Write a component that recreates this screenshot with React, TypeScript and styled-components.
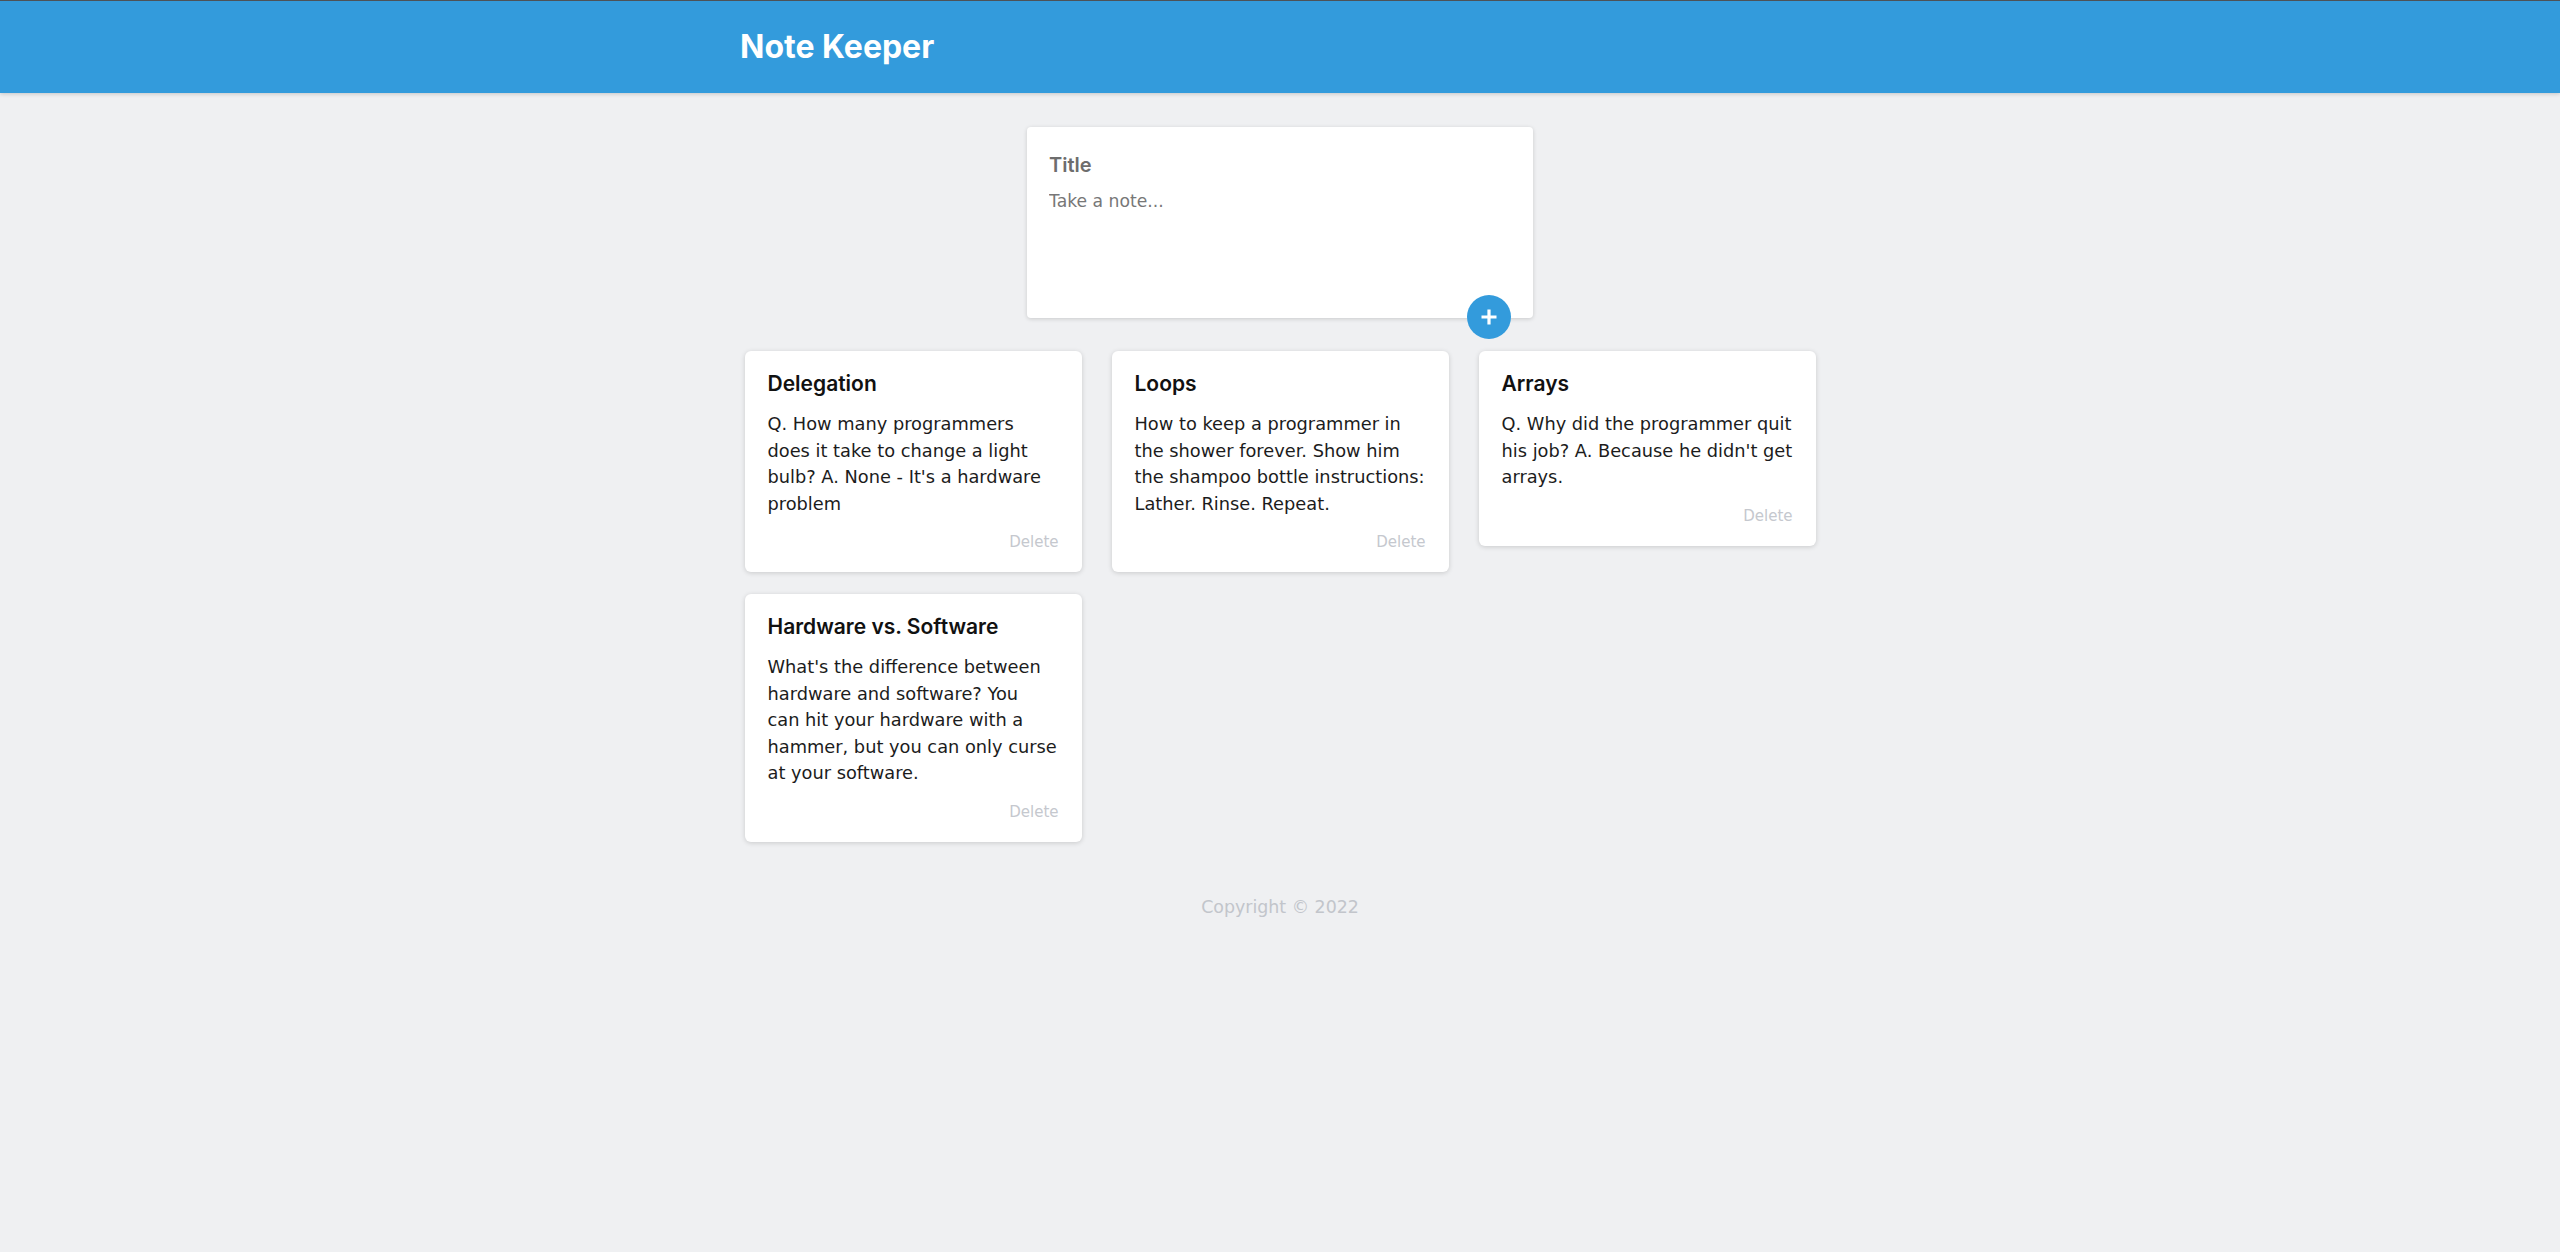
import React from "react";
import styled, { createGlobalStyle } from "styled-components";

const GlobalStyle = createGlobalStyle`
  html, body {
    margin: 0;
    padding: 0;
  }
  body {
    background: #eff0f2;
    font-family: "DejaVu Sans", "Noto Sans", sans-serif;
  }
  *, *::before, *::after {
    box-sizing: border-box;
  }
`;

const Page = styled.div`
  min-height: 100vh;
  display: flex;
  flex-direction: column;
`;

const Header = styled.header`
  height: 93px;
  border-top: 1px solid #4d5257;
  background: #339bdc;
  box-shadow: 0 1px 4px rgba(0, 0, 0, 0.18);
  display: flex;
  align-items: center;
`;

const HeaderInner = styled.div`
  width: 1080px;
  margin: 0 auto;
`;

const Brand = styled.h1`
  margin: 0;
  font-family: Inter, "Liberation Sans", sans-serif;
  font-weight: 700;
  font-size: 32px;
  line-height: 1;
  color: #ffffff;
`;

const Main = styled.main`
  padding-top: 34px;
  display: flex;
  flex-direction: column;
  align-items: center;
`;

const CreateForm = styled.form`
  position: relative;
  width: 506px;
  background: #ffffff;
  border-radius: 4px;
  box-shadow: 0 1px 4px rgba(0, 0, 0, 0.16);
  padding: 24px 22px 24px;
`;

const TitleInput = styled.input`
  display: block;
  width: 100%;
  height: 28px;
  padding: 0;
  border: none;
  outline: none;
  background: transparent;
  font-family: Inter, "Liberation Sans", sans-serif;
  font-weight: 600;
  font-size: 20px;
  color: #333;
  &::placeholder {
    color: #6d6d6d;
    opacity: 1;
  }
`;

const NoteInput = styled.textarea`
  display: block;
  width: 100%;
  height: 106px;
  margin-top: 9px;
  padding: 0;
  border: none;
  outline: none;
  resize: none;
  background: transparent;
  font-family: "DejaVu Sans", sans-serif;
  font-size: 17.2px;
  line-height: 26px;
  color: #333;
  &::placeholder {
    color: #777777;
    opacity: 1;
  }
`;

const AddButton = styled.button`
  position: absolute;
  right: 22px;
  bottom: -21px;
  width: 44px;
  height: 44px;
  border-radius: 50%;
  border: none;
  padding: 0;
  background: #339bdc;
  color: #ffffff;
  display: flex;
  align-items: center;
  justify-content: center;
  cursor: pointer;
`;

const NotesGrid = styled.section`
  margin-top: 33px;
  display: grid;
  grid-template-columns: repeat(3, 337px);
  column-gap: 30px;
  row-gap: 22px;
  align-items: start;
  justify-content: center;
`;

const Card = styled.article`
  background: #ffffff;
  border-radius: 6px;
  box-shadow: 0 1px 5px rgba(0, 0, 0, 0.16);
  padding: 18px 23px 20px;
  display: flex;
  flex-direction: column;
`;

const CardTitle = styled.h2`
  margin: 0;
  font-family: Inter, "Liberation Sans", sans-serif;
  font-weight: 600;
  font-size: 21px;
  line-height: 29px;
  color: #111111;
`;

const CardBody = styled.p`
  margin: 13px 0 0;
  font-family: "DejaVu Sans", sans-serif;
  font-size: 17.8px;
  line-height: 26.5px;
  color: #1c1c1c;
  white-space: pre;
`;

const DeleteButton = styled.button`
  align-self: flex-end;
  margin-top: 15px;
  padding: 0;
  border: none;
  background: none;
  font-family: "DejaVu Sans", sans-serif;
  font-size: 15px;
  line-height: 20px;
  color: #c5c8ce;
  cursor: pointer;
`;

const Footer = styled.footer`
  margin-top: 53px;
  text-align: center;
  font-family: "DejaVu Sans", sans-serif;
  font-size: 17.4px;
  line-height: 24px;
  color: #c2c5cb;
`;

type Note = { title: string; content: string };

const notes: Note[] = [
  {
    title: "Delegation",
    content:
      "Q. How many programmers\ndoes it take to change a light\nbulb? A. None - It's a hardware\nproblem",
  },
  {
    title: "Loops",
    content:
      "How to keep a programmer in\nthe shower forever. Show him\nthe shampoo bottle instructions:\nLather. Rinse. Repeat.",
  },
  {
    title: "Arrays",
    content:
      "Q. Why did the programmer quit\nhis job? A. Because he didn't get\narrays.",
  },
  {
    title: "Hardware vs. Software",
    content:
      "What's the difference between\nhardware and software? You\ncan hit your hardware with a\nhammer, but you can only curse\nat your software.",
  },
];

const PlusIcon = () => (
  <svg width="18" height="18" viewBox="0 0 18 18" aria-hidden="true">
    <path d="M9 1.5v15M1.5 9h15" stroke="#ffffff" strokeWidth="3.2" strokeLinecap="butt" />
  </svg>
);

export default function App() {
  return (
    <Page>
      <GlobalStyle />
      <Header>
        <HeaderInner>
          <Brand>Note Keeper</Brand>
        </HeaderInner>
      </Header>
      <Main>
        <CreateForm onSubmit={(e) => e.preventDefault()}>
          <TitleInput name="title" placeholder="Title" />
          <NoteInput name="content" placeholder="Take a note..." />
          <AddButton type="submit" aria-label="Add note">
            <PlusIcon />
          </AddButton>
        </CreateForm>
        <NotesGrid>
          {notes.map((n) => (
            <Card key={n.title}>
              <CardTitle>{n.title}</CardTitle>
              <CardBody>{n.content}</CardBody>
              <DeleteButton type="button">Delete</DeleteButton>
            </Card>
          ))}
        </NotesGrid>
        <Footer>Copyright © 2022</Footer>
      </Main>
    </Page>
  );
}
